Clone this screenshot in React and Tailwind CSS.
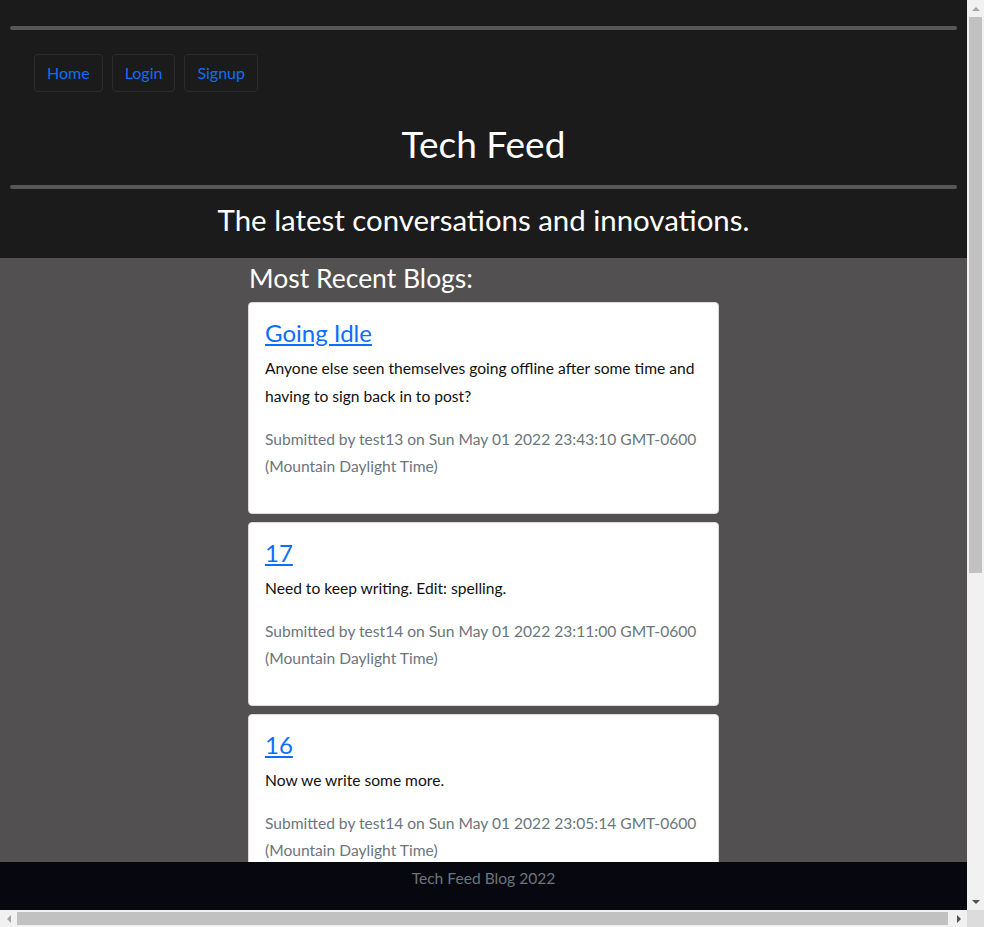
import React from 'react';

const font = { fontFamily: 'Lato, "Open Sans", sans-serif' };

const posts = [
  {
    id: 18,
    title: 'Going Idle',
    body: 'Anyone else seen themselves going offline after some time and having to sign back in to post?',
    author: 'test13',
    date: 'Sun May 01 2022 23:43:10 GMT-0600 (Mountain Daylight Time)',
  },
  {
    id: 17,
    title: '17',
    body: 'Need to keep writing. Edit: spelling.',
    author: 'test14',
    date: 'Sun May 01 2022 23:11:00 GMT-0600 (Mountain Daylight Time)',
  },
  {
    id: 16,
    title: '16',
    body: 'Now we write some more.',
    author: 'test14',
    date: 'Sun May 01 2022 23:05:14 GMT-0600 (Mountain Daylight Time)',
  },
];

const Arrow = ({ dir, dark }) => {
  const pts = {
    up: '0,4 4,0 8,4',
    down: '0,0 8,0 4,4',
    left: '4,0 4,8 0,4',
    right: '0,0 0,8 4,4',
  }[dir];
  const horiz = dir === 'left' || dir === 'right';
  return (
    <svg width={horiz ? 4 : 8} height={horiz ? 8 : 4} viewBox={horiz ? '0 0 4 8' : '0 0 8 4'}>
      <polygon points={pts} fill={dark ? '#505050' : '#a3a3a3'} />
    </svg>
  );
};

const NavButton = ({ label }) => (
  <a
    href="#"
    className="px-[12px] h-[38px] flex items-center border border-[#2c2c2c] rounded-[4px] text-[#0d6efd] text-[16px]"
  >
    {label}
  </a>
);

const BlogCard = ({ post }) => (
  <div className="bg-white border border-[#d9d9d9] rounded-[4px] px-[16px] pt-[16px] pb-[17px]">
    <a href="#" className="block text-[24px] leading-[28px] mb-[7px] text-[#0d6efd] underline w-fit">
      {post.title}
    </a>
    <p className="text-[15.6px] leading-[28px] mb-[16px] text-[#111]">{post.body}</p>
    <p className="text-[15.6px] leading-[27px] mb-[16px] text-[#6c757d]">
      {`Submitted by ${post.author} on ${post.date}`}
    </p>
  </div>
);

export default function App() {
  return (
    <div style={font} className="h-screen flex flex-col bg-[#f1f1f1] overflow-hidden">
      <div className="flex h-[910px]">
        {/* Page */}
        <div className="relative w-[967px] h-full overflow-hidden bg-[#525050]">
          <header className="bg-[#1b1b1b] px-[10px] pt-[26px] pb-[19px]">
            <hr className="border-0 h-[4px] bg-[#575757] rounded-full" />
            <nav className="flex gap-[9px] px-[24px] mt-[24px]">
              <NavButton label="Home" />
              <NavButton label="Login" />
              <NavButton label="Signup" />
            </nav>
            <h1 className="text-center text-white text-[37px] leading-[48px] mt-[28px]">Tech Feed</h1>
            <hr className="border-0 h-[4px] bg-[#575757] rounded-full mt-[17px]" />
            <h2 className="text-center text-white text-[29.4px] leading-[38px] mt-[12px]">
              The latest conversations and innovations.
            </h2>
          </header>

          <main className="w-[471px] mx-auto pt-[3px]">
            <h3 className="text-white text-[26.5px] leading-[34px] mb-[7px] pl-[1px]">Most Recent Blogs:</h3>
            <div className="flex flex-col gap-[8px]">
              {posts.map((post) => (
                <BlogCard key={post.id} post={post} />
              ))}
            </div>
          </main>

          {/* Footer sits over the feed */}
          <footer className="absolute bottom-0 left-0 right-0 h-[48px] bg-[#07080f] text-center text-[#6c757d] text-[15.6px] pt-[5px]">
            Tech Feed Blog 2022
          </footer>
        </div>

        {/* Vertical scrollbar */}
        <div className="w-[17px] h-full flex flex-col bg-[#f1f1f1]">
          <div className="h-[17px] flex items-center justify-center">
            <Arrow dir="up" />
          </div>
          <div className="flex-1 px-[2px]">
            <div className="h-[556px] bg-[#c1c1c1]" />
          </div>
          <div className="h-[17px] flex items-center justify-center">
            <Arrow dir="down" dark />
          </div>
        </div>
      </div>

      {/* Horizontal scrollbar */}
      <div className="flex h-[17px]">
        <div className="w-[967px] flex bg-[#f1f1f1]">
          <div className="w-[17px] flex items-center justify-center">
            <Arrow dir="left" />
          </div>
          <div className="flex-1 py-[2px]">
            <div className="w-[931px] h-full bg-[#c1c1c1]" />
          </div>
          <div className="w-[17px] flex items-center justify-center">
            <Arrow dir="right" dark />
          </div>
        </div>
        <div className="w-[17px] bg-[#dcdcdc]" />
      </div>
    </div>
  );
}
